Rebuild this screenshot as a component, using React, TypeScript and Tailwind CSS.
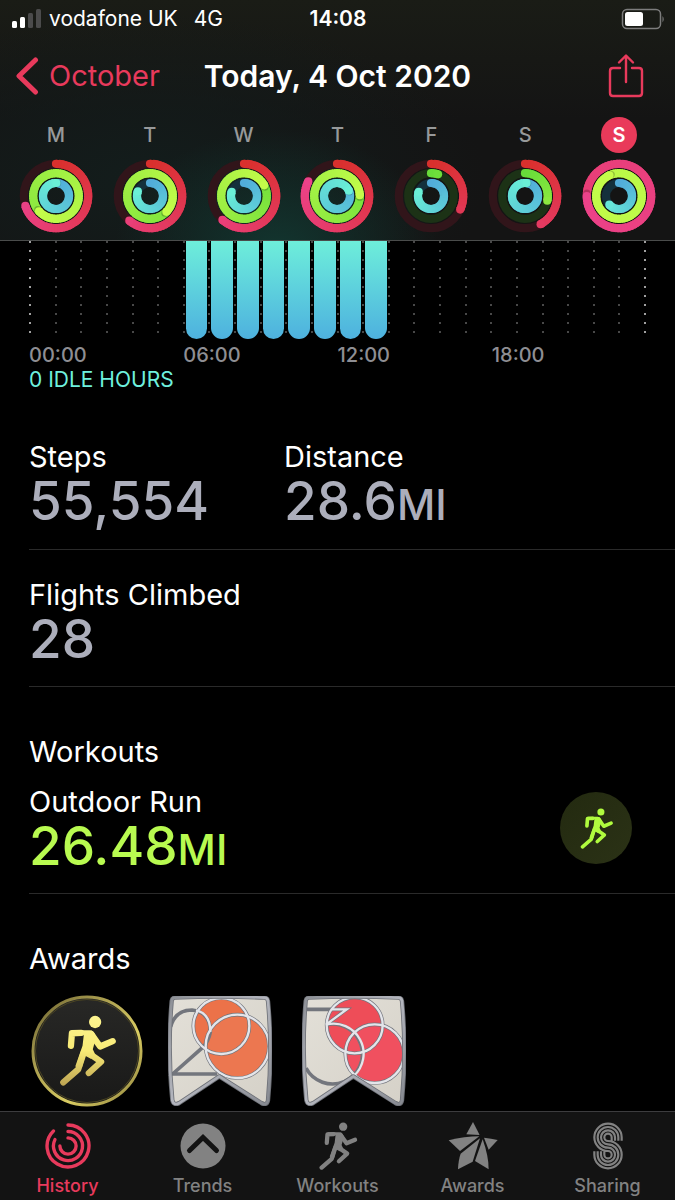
import type { ReactNode } from 'react';

type RGB = [number, number, number];

interface Day {
  id: string;
  letter: string;
  // degrees covered by each ring, more than 360 means another lap
  move: number;
  exercise: number;
  stand: number;
  selected?: boolean;
}

const DAYS: Day[] = [
  { id: 'mon', letter: 'M', move: 252, exercise: 588, stand: 362 },
  { id: 'tue', letter: 'T', move: 220, exercise: 494, stand: 291 },
  { id: 'wed', letter: 'W', move: 222, exercise: 422, stand: 289 },
  { id: 'thu', letter: 'T', move: 297, exercise: 448, stand: 426 },
  { id: 'fri', letter: 'F', move: 115, exercise: 18, stand: 289 },
  { id: 'sat', letter: 'S', move: 151, exercise: 102, stand: 367 },
  { id: 'sun', letter: 'S', move: 1710, exercise: 3215, stand: 228, selected: true },
];

const HOURS = Array.from({ length: 24 }, (_, hour) => hour);
const HOUR_LABELS = ['00:00', '06:00', '12:00', '18:00'];

const mix = (a: RGB, b: RGB, t: number) =>
  `rgb(${a.map((v, i) => Math.round(v + (b[i] - v) * t)).join(',')})`;

const point = (r: number, deg: number) => {
  const rad = ((deg - 90) * Math.PI) / 180;
  return [37 + r * Math.cos(rad), 37 + r * Math.sin(rad)];
};

const arc = (r: number, from: number, to: number) => {
  const [x1, y1] = point(r, from);
  const [x2, y2] = point(r, to);
  return `M${x1} ${y1}A${r} ${r} 0 ${to - from > 180 ? 1 : 0} 1 ${x2} ${y2}`;
};

function Ring({ r, total, from, to, track }: { r: number; total: number; from: RGB; to: RGB; track: string }) {
  const start = Math.max(0, total - 360);
  // short rings stay near their first colour
  const span = Math.max(total, 270);
  const steps = Math.ceil((total - start) / 5);
  const size = (total - start) / steps;
  const [hx, hy] = point(r, total);
  const [sx, sy] = point(r, total + 5);
  const [tx, ty] = point(r, 0);

  return (
    <g>
      <circle cx="37" cy="37" r={r} fill="none" stroke={track} strokeWidth="8.2" />
      {start === 0 && <circle cx={tx} cy={ty} r="4.1" fill={mix(from, to, 0)} />}
      {Array.from({ length: steps }, (_, i) => {
        const a = start + i * size;
        return (
          <path
            key={i}
            d={arc(r, a, Math.min(a + size + 4, total))}
            fill="none"
            stroke={mix(from, to, a / span)}
            strokeWidth="8.2"
          />
        );
      })}
      {total > 360 && <circle cx={sx} cy={sy} r="3.6" fill="#000" opacity="0.22" />}
      <circle cx={hx} cy={hy} r="4.1" fill={mix(from, to, total / span)} />
    </g>
  );
}

function ActivityRings({ day }: { day: Day }) {
  return (
    <svg viewBox="0 0 74 74" className="w-[74px] h-[74px]" aria-hidden="true">
      <Ring r={32.2} total={day.move} from={[217, 48, 45]} to={[236, 66, 138]} track="#31151a" />
      <Ring r={22.8} total={day.exercise} from={[104, 220, 58]} to={[196, 252, 74]} track="#1c3216" />
      <Ring r={13} total={day.stand} from={[82, 172, 218]} to={[106, 240, 214]} track="#14303c" />
    </svg>
  );
}

function RunnerShape({ paint }: { paint: string }) {
  return (
    <>
      <circle cx="227" cy="114" r="18.500" fill={paint} />
      <path d="M158 139h52q10 0 15 9l9 18-9 12-5 18 6 13-12 16-17-9-10 36-20-4 22-62 4-34-35-5z" fill={paint} />
      <g fill="none" stroke={paint} strokeWidth="19" strokeLinecap="round" strokeLinejoin="round">
        <path d="M154 186l3-38 28-1" />
        <path d="M215 150l27 38 38-16" />
        <path d="M193 205l-17 52-45 39" />
        <path d="M203 205l42 29-37 34" />
      </g>
    </>
  );
}

function Runner({ className }: { className: string }) {
  return (
    <svg viewBox="118 93 172 214" className={className} aria-hidden="true">
      <RunnerShape paint="currentColor" />
    </svg>
  );
}

function BadgeFrame({ id, children }: { id: string; children: ReactNode }) {
  const shape =
    'M20 5Q156-1 290 5Q299 6 300 15Q314 165 300 313Q297 330 280 321L154 241L34 321Q17 330 13 313Q-2 165 11 15Q12 6 20 5Z';
  return (
    <>
      <defs>
        <linearGradient id={`${id}-metal`} x1="0" y1="0" x2="1" y2="1">
          <stop offset="0" stopColor="#8d9096" />
          <stop offset="0.5" stopColor="#b4b6be" />
          <stop offset="1" stopColor="#85888f" />
        </linearGradient>
        <linearGradient id={`${id}-face`} x1="0" y1="0" x2="1" y2="1">
          <stop offset="0" stopColor="#e3e0d8" />
          <stop offset="1" stopColor="#d5d1c8" />
        </linearGradient>
      </defs>
      <path d={shape} fill={`url(#${id}-face)`} />
      {children}
      <path d={shape} fill="none" stroke="#6d7077" strokeWidth="13" strokeLinejoin="round" />
      <path d={shape} fill="none" stroke={`url(#${id}-metal)`} strokeWidth="8" strokeLinejoin="round" />
    </>
  );
}

function DoubleBadge() {
  return (
    <svg viewBox="0 0 312 330" className="w-[104px] h-[110px]" role="img" aria-label="200% Move award">
      <BadgeFrame id="double">
        <circle cx="160" cy="90" r="84" fill="#ec7249" />
        <circle cx="208" cy="151" r="95" fill="#ec7750" />
        <g fill="none" stroke="#73767d" strokeWidth="11">
          <path d="M8 92Q22 42 72 42Q127 48 127 108Q122 138 100 158L14 234H148" />
          <circle cx="208" cy="151" r="95" />
          <circle cx="160" cy="90" r="84" />
        </g>
        <g fill="none" stroke="#e4e5ea" strokeWidth="7">
          <circle cx="160" cy="90" r="84" />
          <circle cx="208" cy="151" r="95" />
          <path d="M84 43Q127 52 127 108" />
        </g>
      </BadgeFrame>
    </svg>
  );
}

function TripleBadge() {
  return (
    <svg viewBox="0 0 312 330" className="w-[104px] h-[110px]" role="img" aria-label="300% Move award">
      <BadgeFrame id="triple">
        <circle cx="158" cy="88" r="84" fill="#ee4d58" />
        <circle cx="218" cy="173" r="88" fill="#f0505f" />
        <g fill="none" stroke="#73767d" strokeWidth="11">
          <path d="M10 40H134L72 86A90 90 0 1 1 12 216" />
          <circle cx="158" cy="88" r="84" />
          <circle cx="218" cy="173" r="88" />
        </g>
        <g fill="none" stroke="#e4e5ea" strokeWidth="7">
          <circle cx="158" cy="88" r="84" />
          <circle cx="218" cy="173" r="88" />
          <path d="M90 40H134L72 86A90 90 0 0 1 155 240" />
        </g>
      </BadgeFrame>
    </svg>
  );
}

function RunMedal() {
  return (
    <svg viewBox="0 0 112 112" className="w-[112px] h-[112px]" role="img" aria-label="Marathon award">
      <defs>
        <linearGradient id="gold-rim" x1="0" y1="0" x2="1" y2="1">
          <stop offset="0" stopColor="#6a6130" />
          <stop offset="0.3" stopColor="#a5994d" />
          <stop offset="0.65" stopColor="#d9cc62" />
          <stop offset="1" stopColor="#8a7e3c" />
        </linearGradient>
        <linearGradient id="gold-man" gradientUnits="userSpaceOnUse" x1="200" y1="95" x2="190" y2="305">
          <stop offset="0" stopColor="#fdf490" />
          <stop offset="0.5" stopColor="#f8ea76" />
          <stop offset="1" stopColor="#bfa653" />
        </linearGradient>
        <linearGradient id="medal-face" x1="0" y1="0" x2="0" y2="1">
          <stop offset="0" stopColor="#282826" />
          <stop offset="1" stopColor="#191918" />
        </linearGradient>
      </defs>
      <circle cx="56" cy="56" r="54" fill="url(#medal-face)" stroke="url(#gold-rim)" strokeWidth="3" />
      <circle cx="56" cy="56" r="51.500" fill="none" stroke="#4b4522" strokeWidth="1" />
      <svg x="28" y="20" width="57" height="71" viewBox="118 93 172 214">
        <RunnerShape paint="url(#gold-man)" />
      </svg>
    </svg>
  );
}

function HistoryIcon() {
  return (
    <svg viewBox="0 0 74 74" className="w-[50px] h-[50px]" aria-hidden="true">
      <g fill="none" stroke="currentColor" strokeWidth="5" strokeLinecap="round">
        <path d={arc(31, 0, 316)} />
        <path d={arc(21.5, 0, 296)} />
        <path d={arc(12, 0, 270)} />
      </g>
    </svg>
  );
}

function TrendsIcon() {
  return (
    <svg viewBox="0 0 50 50" className="w-[50px] h-[50px]" aria-hidden="true">
      <circle cx="25" cy="25" r="22.500" fill="currentColor" />
      <path d="M11.500 29.500L25 16.500L38.500 29.500" fill="none" stroke="#131313" strokeWidth="5" strokeLinecap="round" />
    </svg>
  );
}

function AwardsIcon() {
  return (
    <svg viewBox="334 51 150 150" className="w-[50px] h-[50px]" fill="currentColor" aria-hidden="true">
      <path d="M409 54l20 39-40-2z" />
      <path d="M336 109q48-12 92-12l-58 44z" />
      <path d="M442 101q22 2 41 7l-27 29z" />
      <path d="M430 103l-22 70-44 23q1-28 8-47z" />
      <path d="M438 106q18 50 18 90l-41-25z" />
    </svg>
  );
}

function SharingIcon() {
  return (
    <svg viewBox="742 48 150 150" className="w-[50px] h-[50px]" aria-hidden="true">
      {[41, 31, 21, 11].map((r) => {
        const q = 52 - r;
        return (
          <path
            key={r}
            d={`M${817 + r} 107V97A${r} ${r} 0 1 0 817 ${97 + r}A${q} ${q} 0 1 1 ${817 - q} 149V139`}
            fill="none"
            stroke="currentColor"
            strokeWidth="6.500"
          />
        );
      })}
    </svg>
  );
}

const TABS = [
  { label: 'History', icon: <HistoryIcon />, active: true },
  { label: 'Trends', icon: <TrendsIcon /> },
  { label: 'Workouts', icon: <Runner className="w-[40px] h-[48px]" /> },
  { label: 'Awards', icon: <AwardsIcon /> },
  { label: 'Sharing', icon: <SharingIcon /> },
];

function StatusBar() {
  return (
    <div className="grid grid-cols-[1fr_auto_1fr] items-center h-[38px] pl-[11px] pr-[10px] text-[21px]">
      <div className="flex items-center">
        <svg viewBox="0 0 32 20" className="w-[32px] h-[20px] mr-[6px]" aria-hidden="true">
          <rect x="1" y="12" width="5" height="7" rx="1.500" fill="#fff" />
          <rect x="9" y="8" width="5" height="11" rx="1.500" fill="#fff" />
          <rect x="17" y="4" width="5" height="15" rx="1.500" fill="#4b4b4b" />
          <rect x="25" y="0" width="5" height="19" rx="1.500" fill="#4b4b4b" />
        </svg>
        <span>vodafone UK</span>
        <span className="ml-4">4G</span>
      </div>
      <span className="font-semibold">14:08</span>
      <svg viewBox="0 0 44 22" className="w-[44px] h-[22px] justify-self-end" aria-hidden="true">
        <rect x="1.500" y="1.500" width="38" height="19" rx="4.500" fill="none" stroke="#7d7d7d" strokeWidth="1.500" />
        <rect x="4" y="4" width="18" height="14" rx="2.500" fill="#fff" />
        <path d="M41.500 8q2.500 3 0 6.500z" fill="#7d7d7d" />
      </svg>
    </div>
  );
}

function Stat({ label, value, unit, color }: { label: string; value: string; unit?: string; color: string }) {
  return (
    <div>
      <div className="text-[29px] leading-9">{label}</div>
      <div className={`text-[53px] leading-[52px] font-medium ${color}`}>
        {value}
        {unit && <span className="text-[42px] leading-none">{unit}</span>}
      </div>
    </div>
  );
}

export default function App() {
  return (
    <div className="min-h-screen flex flex-col bg-black text-white font-['Inter',sans-serif]">
      {/* Header */}
      <header className="border-b border-[#4a4c4b] bg-[#141414] bg-[radial-gradient(ellipse_24%_50%_at_41%_104%,#12352f,transparent),radial-gradient(ellipse_50%_70%_at_22%_75%,#131d1c,transparent),linear-gradient(#1a1c16,#141414_50%)]">
        <StatusBar />

        <div className="grid grid-cols-[1fr_auto_1fr] items-center h-[76px] px-[15px]">
          <a href="#october" className="flex items-center text-[29px] text-[#e83a5c]">
            <svg viewBox="0 0 24 40" className="w-[24px] h-[40px] mr-[10px]" aria-hidden="true">
              <path d="M20.500 4L4 20L20.500 36" fill="none" stroke="currentColor" strokeWidth="5" strokeLinecap="round" strokeLinejoin="round" />
            </svg>
            October
          </a>
          <h1 className="text-[30px] font-semibold">Today, 4 Oct 2020</h1>
          <button type="button" aria-label="Share" className="justify-self-end mr-[15px] text-[#e83a5c]">
            <svg viewBox="0 0 38 46" className="w-[38px] h-[46px]" aria-hidden="true">
              <g fill="none" stroke="currentColor" strokeWidth="2.400" strokeLinecap="round" strokeLinejoin="round">
                <path d="M13 15H6q-3 0-3 3v22q0 3 3 3h26q3 0 3-3v-22q0-3-3-3h-7" />
                <path d="M19 29V3M12 9.500L19 2.500L26 9.500" />
              </g>
            </svg>
          </button>
        </div>

        <div className="grid grid-cols-7 px-[9px] pt-[3px] pb-[7px]">
          {DAYS.map((day) => (
            <button key={day.id} type="button" aria-pressed={!!day.selected} className="flex flex-col items-center gap-[6px]">
              <span
                className={
                  day.selected
                    ? 'flex items-center justify-center size-9 rounded-full bg-[#e93a5a] text-[20px] font-semibold'
                    : 'flex items-center justify-center size-9 text-[20px] font-medium text-[#97999a]'
                }
              >
                {day.letter}
              </span>
              <ActivityRings day={day} />
            </button>
          ))}
        </div>
      </header>

      <main className="flex-1 pb-1">
        {/* Stand hours */}
        <section className="px-[29px]">
          <div className="flex h-[98px]">
            {HOURS.map((hour) => (
              <div
                key={hour}
                className={
                  hour === 0
                    ? 'flex-1 bg-[linear-gradient(#a0a0a0_2px,transparent_2px)] bg-[length:2px_9px] bg-repeat-y'
                    : 'flex-1 bg-[linear-gradient(#484848_2px,transparent_2px)] bg-[length:2px_9px] bg-repeat-y'
                }
              >
                {hour >= 6 && hour < 14 && (
                  <div className="h-full ml-[3px] mr-px rounded-b-full bg-linear-to-b from-[#6eeeda] to-[#4eb1de]" />
                )}
              </div>
            ))}
            <div className="w-[2px] bg-[linear-gradient(#a0a0a0_2px,transparent_2px)] bg-[length:2px_9px] bg-repeat-y" />
          </div>
          <div className="grid grid-cols-4 mt-1 text-[20px] leading-6 font-medium text-[#8e8e93]">
            {HOUR_LABELS.map((label) => (
              <span key={label}>{label}</span>
            ))}
          </div>
          <p className="mt-px text-[21px] leading-6 text-[#6ff0de]">0 IDLE HOURS</p>
        </section>

        {/* Totals */}
        <section className="ml-[29px] mt-[47px]">
          <div className="grid grid-cols-[255px_1fr] pb-[22px] border-b border-[#2a2a2a]">
            <Stat label="Steps" value="55,554" color="text-[#acaebb]" />
            <Stat label="Distance" value="28.6" unit="MI" color="text-[#acaebb]" />
          </div>
          <div className="pt-[27px] pb-[21px] border-b border-[#2a2a2a]">
            <Stat label="Flights Climbed" value="28" color="text-[#acaebb]" />
          </div>
        </section>

        {/* Workouts */}
        <section className="ml-[29px] mt-[47px] border-b border-[#2a2a2a]">
          <h2 className="text-[29px] leading-9">Workouts</h2>
          <a href="#outdoor-run" className="flex items-center justify-between pt-[14px] pb-[21px] pr-[43px]">
            <Stat label="Outdoor Run" value="26.48" unit="MI" color="text-[#b8fa50]" />
            <span className="flex items-center justify-center size-[72px] rounded-full bg-linear-to-br from-[#232a10] to-[#2b3216] text-[#b0fb3e]">
              <Runner className="w-[33px] h-[41px]" />
            </span>
          </a>
        </section>

        {/* Awards */}
        <section className="pl-[29px] mt-[47px]">
          <h2 className="text-[29px] leading-9">Awards</h2>
          <div className="flex items-center mt-[18px] pl-[2px]">
            <RunMedal />
            <div className="flex gap-[30px] ml-[25px]">
              <DoubleBadge />
              <TripleBadge />
            </div>
          </div>
        </section>
      </main>

      {/* Tab bar */}
      <nav className="grid grid-cols-5 border-t border-[#3c3c3e] bg-[#131313] pt-[9px] pb-[2px]">
        {TABS.map((tab) => (
          <a
            key={tab.label}
            href={`#${tab.label.toLowerCase()}`}
            aria-current={tab.active ? 'page' : undefined}
            className={tab.active ? 'flex flex-col items-center text-[#e83a5c]' : 'flex flex-col items-center text-[#828282]'}
          >
            <span className="flex items-center justify-center h-[50px]">{tab.icon}</span>
            <span className="mt-[3px] text-[18px] leading-6 font-medium">{tab.label}</span>
          </a>
        ))}
      </nav>
    </div>
  );
}
